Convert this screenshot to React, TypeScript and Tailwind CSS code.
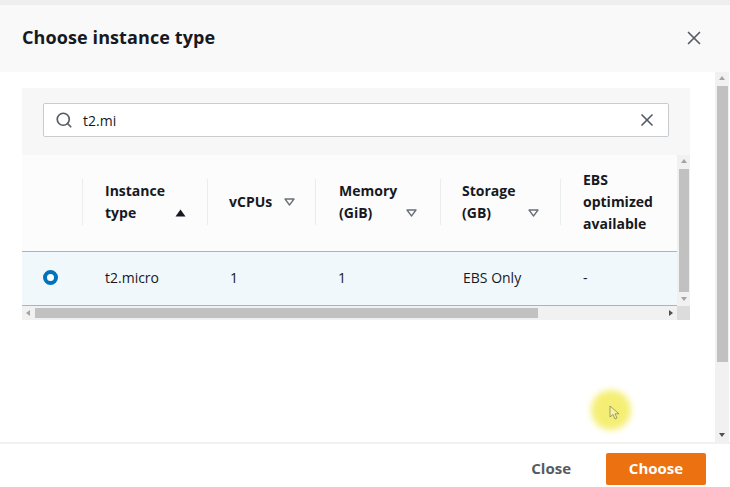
import React from 'react';
import { Search, X } from 'lucide-react';

type Col = {
    label: string[];
    width: string;
    pad: string;
    sort?: 'asc' | 'none';
    sortLine?: 'mid' | 'last';
};

const columns: Col[] = [
    { label: ['Instance', 'type'], width: 'w-[125px]', pad: 'pl-[22px] pr-[21px]', sort: 'asc', sortLine: 'last' },
    { label: ['vCPUs'], width: 'w-[108px]', pad: 'pl-[21px] pr-[20px]', sort: 'none', sortLine: 'mid' },
    { label: ['Memory', '(GiB)'], width: 'w-[125px]', pad: 'pl-[23px] pr-[23px]', sort: 'none', sortLine: 'last' },
    { label: ['Storage', '(GB)'], width: 'w-[120px]', pad: 'pl-[21px] pr-[21px]', sort: 'none', sortLine: 'last' },
    { label: ['EBS', 'optimized', 'available'], width: 'w-[140px]', pad: 'pl-[22px]' },
];

const rowValues = ['t2.micro', '1', '1', 'EBS Only', '-'];

const SortIcon: React.FC<{ kind: 'asc' | 'none' }> = ({ kind }) =>
    kind === 'asc' ? (
        <svg width="11" height="8" viewBox="0 0 11 8">
            <path d="M5.5 0.5 L10.5 7.5 L0.5 7.5 Z" fill="#16191f" />
        </svg>
    ) : (
        <svg width="11" height="8" viewBox="0 0 11 8">
            <path d="M1 1 L10 1 L5.5 7 Z" fill="none" stroke="#687078" strokeWidth="1.3" strokeLinejoin="round" />
        </svg>
    );

const Arrow: React.FC<{ dir: 'up' | 'down' | 'left' | 'right'; color?: string }> = ({ dir, color = '#a3a3a3' }) => {
    const d = {
        up: 'M1 5 L4 1 L7 5 Z',
        down: 'M1 2 L7 2 L4 6 Z',
        left: 'M5 1 L5 7 L1 4 Z',
        right: 'M2 1 L2 7 L6 4 Z',
    }[dir];
    return (
        <svg width="8" height="8" viewBox="0 0 8 8">
            <path d={d} fill={color} />
        </svg>
    );
};

export default function App() {
    return (
        <div
            className="relative w-[730px] h-[487px] overflow-hidden bg-white flex flex-col text-[#16191f]"
            style={{ fontFamily: '"Open Sans", "Noto Sans", sans-serif' }}
        >
            <div className="h-[5px] bg-[#eeeeee]" />

            {/* header */}
            <div className="h-[67px] bg-[#f9f9f9] flex items-center justify-between pl-[22px] pr-[25px] pb-[2px]">
                <h1 className="text-[18px] font-bold tracking-[0.1px]">Choose instance type</h1>
                <X size={22} strokeWidth={1.8} className="text-[#545b64]" />
            </div>

            {/* body */}
            <div className="h-[370px] flex">
                <div className="flex-1 pt-[16px] pl-[22px]">
                    <div className="w-[668px] h-[232px] bg-[#f7f7f7] flex flex-col">
                        <div className="mx-[21px] mt-[15px] h-[34px] bg-white border border-[#c9cccf] rounded-[2px] flex items-center pl-[11px] pr-[11px]">
                            <Search size={18} strokeWidth={2.2} className="text-[#545b64]" />
                            <span className="ml-[10px] text-[14px]">t2.mi</span>
                            <X size={20} strokeWidth={2} className="ml-auto text-[#545b64]" />
                        </div>

                        <div className="mt-[18px] flex flex-col">
                            <div className="flex">
                                <div className="w-[655px] overflow-hidden">
                                    {/* table header */}
                                    <div className="h-[96px] bg-[#fcfcfc] flex">
                                        <div className="w-[60px] shrink-0" />
                                        {columns.map((c) => (
                                            <div key={c.label.join(' ')} className={`${c.width} shrink-0 flex items-center pb-[2px]`}>
                                                <div className="w-px h-[46px] bg-[#eaeded]" />
                                                <div className={`flex-1 ${c.pad} flex text-[14px] font-bold leading-[22px] ${c.sortLine === 'last' ? 'items-end' : 'items-center'}`}>
                                                    <div className="flex-1">
                                                        {c.label.map((l) => (
                                                            <div key={l}>{l}</div>
                                                        ))}
                                                    </div>
                                                    {c.sort && (
                                                        <div className={`flex ${c.sortLine === 'last' ? 'pb-[7px]' : ''}`}>
                                                            <SortIcon kind={c.sort} />
                                                        </div>
                                                    )}
                                                </div>
                                            </div>
                                        ))}
                                    </div>
                                    {/* selected row */}
                                    <div className="h-[55px] bg-[#f1f8fc] border border-[#86c1d5] flex items-center pb-[3px] text-[14px] w-[700px] -ml-px">
                                        <div className="w-[60px] shrink-0 flex items-center pl-[21px]">
                                            <div className="w-[15px] h-[15px] rounded-full border-[4px] border-[#0073bb] bg-white" />
                                        </div>
                                        {rowValues.map((v, i) => (
                                            <div key={i} className={`${columns[i].width} shrink-0 pl-[23px]`}>
                                                {v}
                                            </div>
                                        ))}
                                    </div>
                                </div>
                                {/* inner vertical scrollbar */}
                                <div className="w-[13px] bg-[#f1f1f1] flex flex-col items-center">
                                    <div className="h-[14px] flex items-center"><Arrow dir="up" /></div>
                                    <div className="w-[10px] flex-1 bg-[#c1c1c1]" />
                                    <div className="h-[14px] flex items-center"><Arrow dir="down" /></div>
                                </div>
                            </div>
                            {/* horizontal scrollbar */}
                            <div className="h-[14px] flex">
                                <div className="w-[655px] bg-[#f1f1f1] flex items-center">
                                    <div className="w-[13px] flex justify-center"><Arrow dir="left" /></div>
                                    <div className="w-[503px] h-[10px] bg-[#c1c1c1]" />
                                    <div className="ml-auto w-[13px] flex justify-center"><Arrow dir="right" color="#505050" /></div>
                                </div>
                                <div className="w-[13px] bg-[#dcdcdc]" />
                            </div>
                        </div>
                    </div>
                </div>

                {/* outer scrollbar */}
                <div className="w-[14px] mr-[1px] bg-[#f1f1f1] flex flex-col items-center">
                    <div className="h-[14px] flex items-center"><Arrow dir="up" /></div>
                    <div className="w-[11px] h-[276px] bg-[#c1c1c1]" />
                    <div className="flex-1" />
                    <div className="h-[14px] flex items-center"><Arrow dir="down" color="#505050" /></div>
                </div>
            </div>

            {/* footer */}
            <div className="h-[2px] bg-[#f1f1f1]" />
            <div className="flex-1 flex items-center justify-end pr-[24px] pt-[6px]">
                <span className="text-[15px] font-bold text-[#545b64] mr-[35px]">Close</span>
                <div className="w-[100px] h-[32px] bg-[#ec7211] rounded-[2px] flex items-center justify-center text-white text-[15px] font-bold">
                    Choose
                </div>
            </div>

            {/* cursor highlight */}
            <div className="absolute left-[591px] top-[390px] w-[40px] h-[40px] rounded-full bg-[#f3ec5c] opacity-85 blur-[3px]" />
            <svg className="absolute left-[609px] top-[405px]" width="12" height="16" viewBox="0 0 12 16">
                <path d="M1 1 L1 12 L4 9.5 L6 14 L8 13 L6 8.8 L10 8.8 Z" fill="#f7f3a0" stroke="#8a8a5a" strokeWidth="0.8" />
            </svg>
        </div>
    );
}
